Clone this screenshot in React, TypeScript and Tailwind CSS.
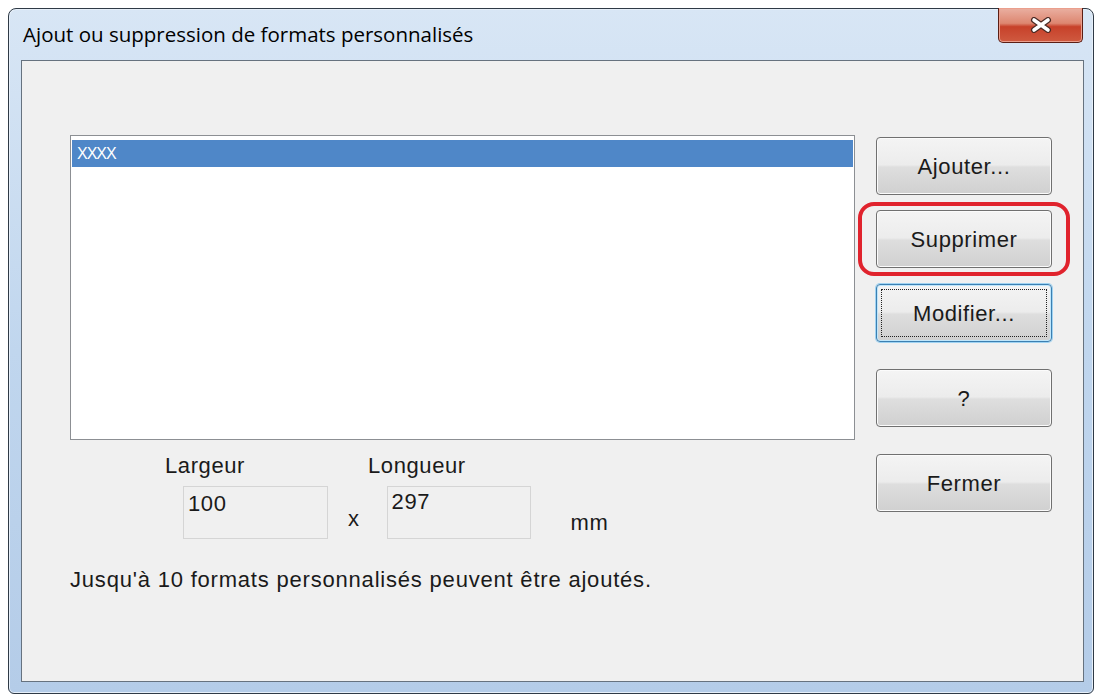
import React from "react";

const body = { fontFamily: '"Liberation Sans", Arial, sans-serif' };
const title = { fontFamily: '"Open Sans", "Noto Sans", sans-serif' };

const CloseGlyph: React.FC = () => (
  <svg width="22" height="16" viewBox="0 0 22 16">
    <path d="M4 3 L18 13 M18 3 L4 13" stroke="#4a2a24" strokeWidth="6" strokeLinecap="round" />
    <path d="M4 3 L18 13 M18 3 L4 13" stroke="#ffffff" strokeWidth="3.6" strokeLinecap="round" />
  </svg>
);

const DialogButton: React.FC<{ label: string; focused?: boolean; className?: string }> = ({
  label,
  focused,
  className = "",
}) => (
  <button
    className={`relative w-[176px] h-[58px] rounded-[4px] border text-[22px] tracking-[0.6px] text-[#1a1a1a] bg-[linear-gradient(to_bottom,#f4f4f4_0%,#ececec_48%,#dedede_52%,#d0d0d0_100%)] ${
      focused
        ? "border-[#3c7fb1] shadow-[0_0_0_1px_#9fd3f2,inset_0_0_0_1px_#bfe6fb]"
        : "border-[#707070] shadow-[inset_0_0_0_1px_#fbfbfb]"
    } ${className}`}
    style={body}
  >
    {focused && (
      <span className="absolute inset-[4px] border border-dotted border-[#222]" />
    )}
    {label}
  </button>
);

export default function App() {
  return (
    <div className="w-[1101px] h-[698px] bg-white pl-[8px] pt-[8px]">
      <div className="w-[1086px] h-[686px] border border-[#2f3a46] rounded-t-[8px] rounded-b-[6px] bg-gradient-to-b from-[#d8e6f5] via-[#c0d6ee] to-[#b4cce8] shadow-[inset_0_0_0_1px_#e6eff9] pl-[12px] pr-[9px] pb-[11px] flex flex-col">
        <div className="h-[51px] flex items-start justify-between">
          <div className="pt-[11px] pl-[2px] text-[20.5px] leading-[28px] text-black" style={title}>
            Ajout ou suppression de formats personnalisés
          </div>
          <div className="-mt-[1px] mr-[1px] w-[85px] h-[35px] rounded-b-[5px] border border-t-0 border-[#5b1e14] bg-[linear-gradient(to_bottom,#eab0a2_0%,#dd8670_45%,#c7412a_55%,#cf5a40_100%)] shadow-[inset_0_0_0_1px_#eb9f8d] flex items-center justify-center">
            <CloseGlyph />
          </div>
        </div>

        <div className="flex-1 border border-[#66727f] bg-[#f0f0f0] pl-[48px] pt-[74px] flex">
          <div className="w-[785px] flex flex-col" style={body}>
            <div className="h-[305px] border border-[#8c8f93] bg-white pt-[4px] px-[1px]">
              <div className="h-[27px] bg-[#4f87c8] pl-[5px] text-[16px] leading-[27px] text-white tracking-[-1px]">
                XXXX
              </div>
            </div>

            <div className="mt-[13px] flex text-[22px] leading-[26px] tracking-[0.6px] text-[#1a1a1a]">
              <span className="ml-[95px] w-[203px]">Largeur</span>
              <span>Longueur</span>
            </div>

            <div className="mt-[7px] flex items-start text-[22px] tracking-[0.6px] text-[#1a1a1a]">
              <div className="ml-[113px] w-[145px] h-[53px] border border-[#d5d5d5] bg-[#f0f0f0] pl-[4px] pt-[4px] leading-[26px]">
                100
              </div>
              <span className="ml-[20px] mt-[20px] leading-[26px]">x</span>
              <div className="ml-[27px] w-[144px] h-[53px] border border-[#d5d5d5] bg-[#f0f0f0] pl-[4px] pt-[2px] leading-[26px]">
                297
              </div>
              <span className="ml-[40px] mt-[24px] leading-[26px]">mm</span>
            </div>

            <div className="mt-[28px] text-[22px] leading-[26px] tracking-[0.8px] text-[#1a1a1a]">
              Jusqu'à 10 formats personnalisés peuvent être ajoutés.
            </div>
          </div>

          <div className="ml-[21px] pt-[2px] flex flex-col">
            <DialogButton label="Ajouter..." />
            <div className="relative mt-[15px]">
              <DialogButton label="Supprimer" />
              <span className="absolute -left-[18px] -right-[18px] -top-[8px] -bottom-[8px] border-[4px] border-[#e0232d] rounded-[16px]" />
            </div>
            <DialogButton label="Modifier..." focused className="mt-[16px]" />
            <DialogButton label="?" className="mt-[27px]" />
            <DialogButton label="Fermer" className="mt-[27px]" />
          </div>
        </div>
      </div>
    </div>
  );
}
